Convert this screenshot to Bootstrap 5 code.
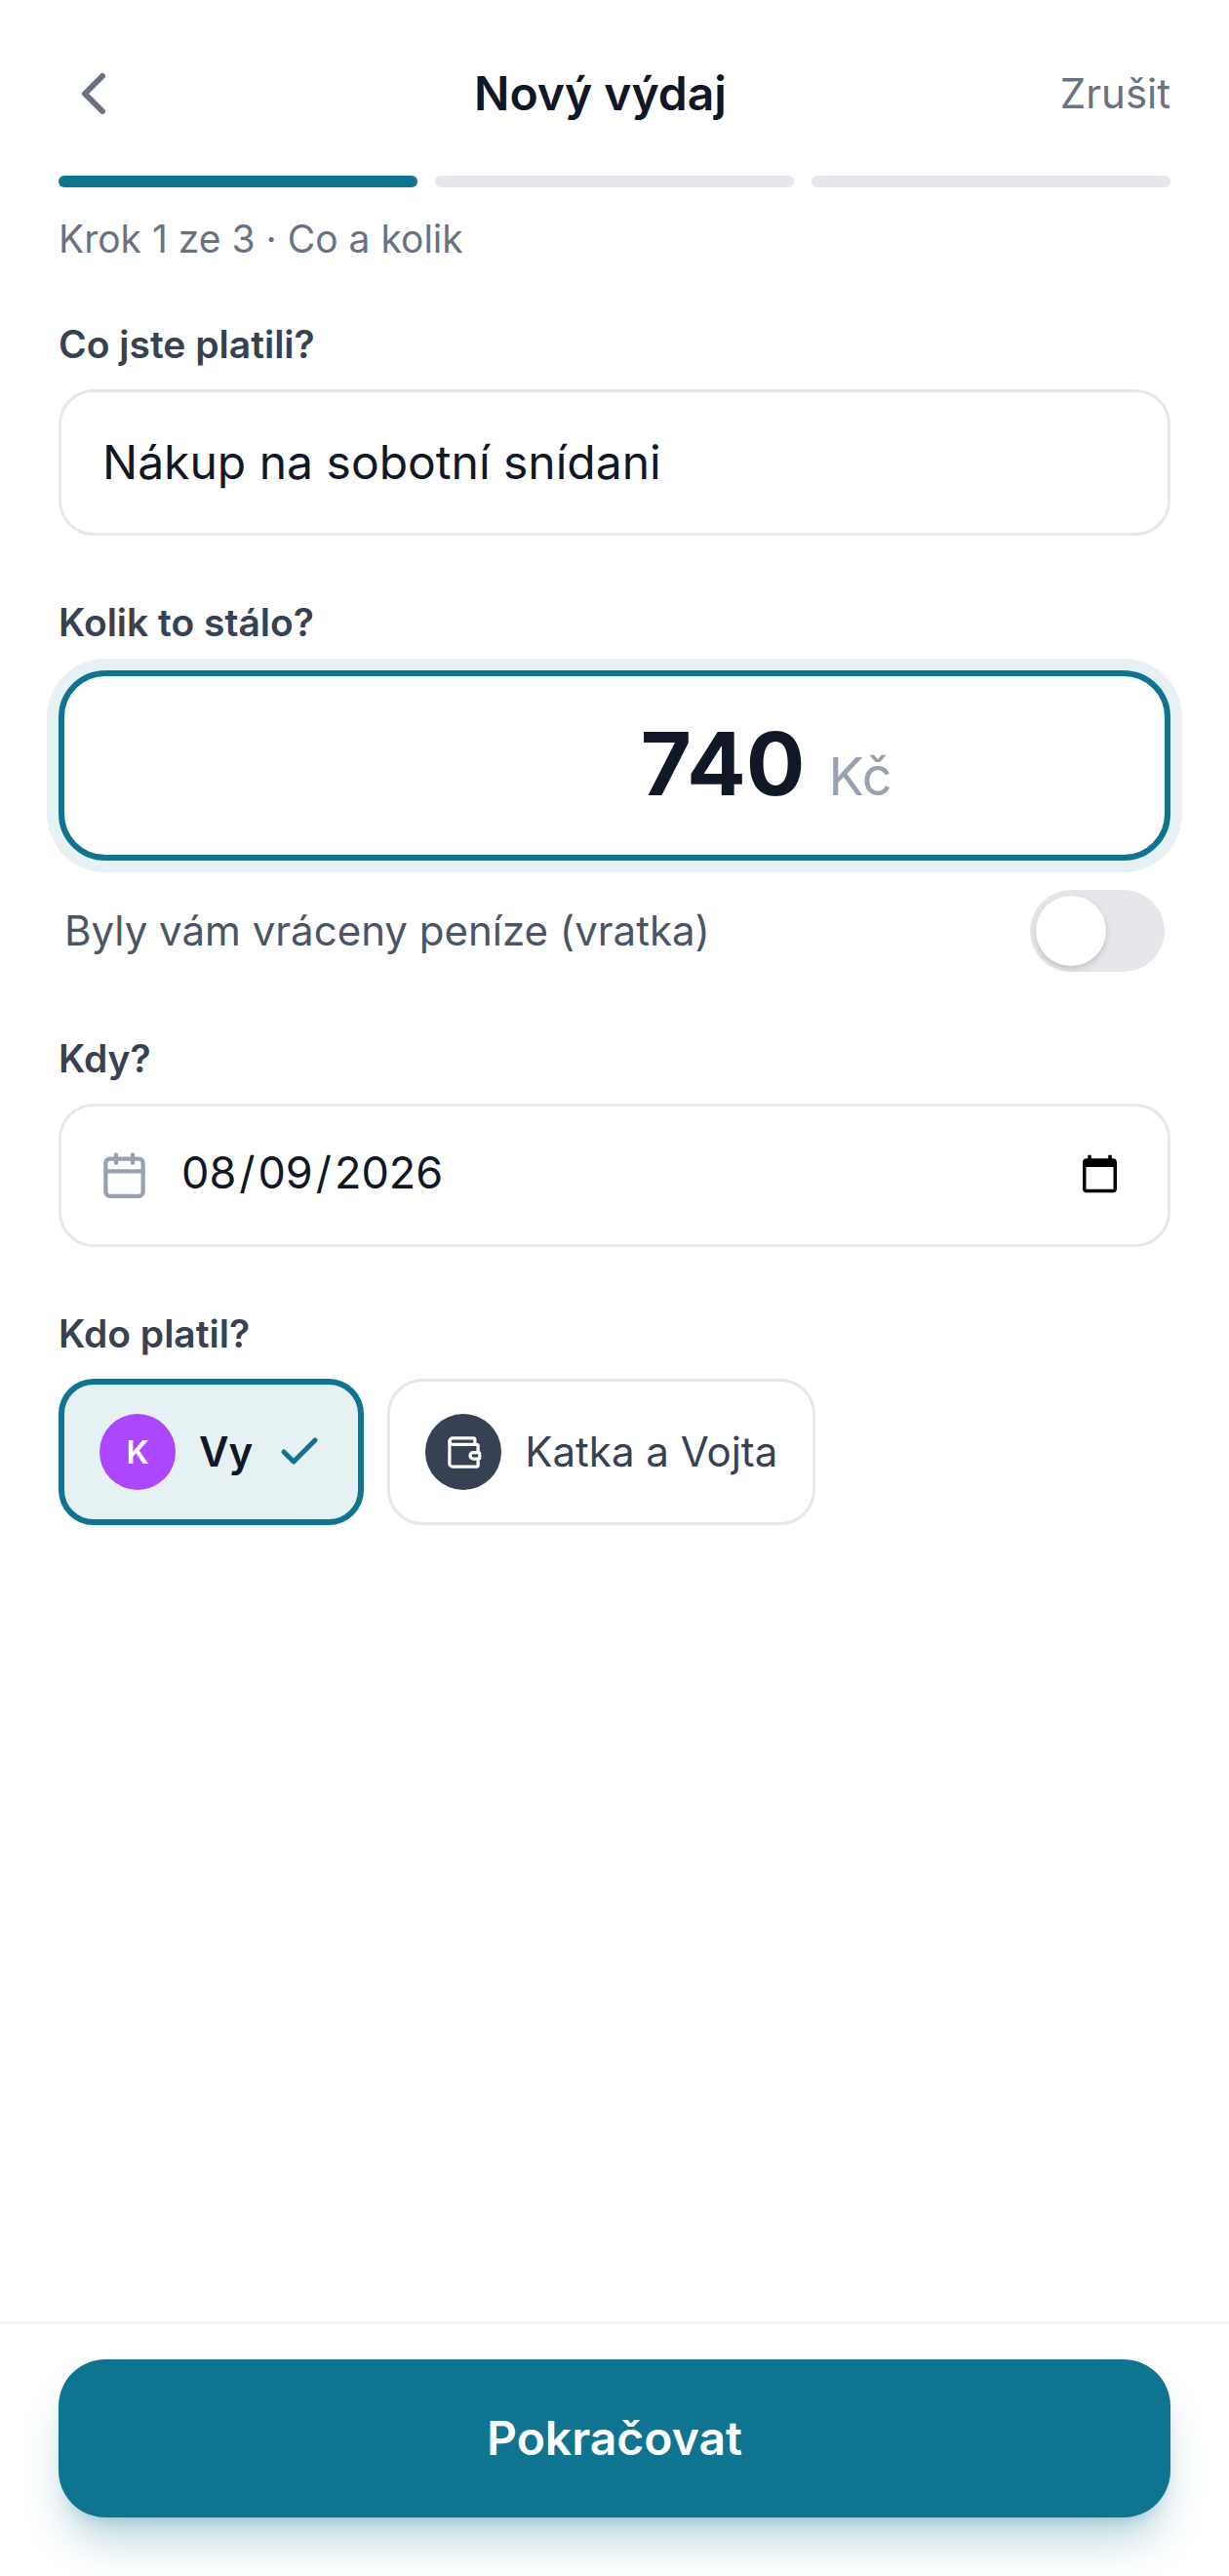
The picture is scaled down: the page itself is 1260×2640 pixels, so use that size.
<!DOCTYPE html>
<html lang="cs">
<head>
<meta charset="utf-8">
<meta name="viewport" content="width=device-width, initial-scale=1">
<title>Nový výdaj</title>
<link rel="stylesheet" href="https://cdn.jsdelivr.net/npm/bootstrap@5.3.0/dist/css/bootstrap.min.css">
<style>
  :root {
    --teal: #0e7490;
    --teal-soft: #e6f1f3;
    --ink: #101828;
    --slate: #364153;
    --muted: #6a7282;
    --faint: #99a1af;
    --line: #e5e7eb;
  }
  body { font-family: Inter, "Liberation Sans", sans-serif; font-size: 42px; line-height: 60px; color: var(--ink); background: #fff; }
  .side-pad { padding-left: 60px; padding-right: 60px; }
  .app-header { padding-top: 48px; padding-bottom: 36px; }
  .back-btn { margin-left: -12px; padding: 12px; line-height: 0; color: var(--muted); }
  .app-title { font-size: 48px; line-height: 72px; font-weight: 600; }
  .cancel-btn { padding: 0; font-size: 42px; line-height: 60px; color: var(--muted); text-decoration: none; }
  .steps { gap: 18px; }
  .step { height: 12px; background: var(--line); }
  .step.done { background: var(--teal); }
  .step-text { margin-top: 24px; font-size: 39px; line-height: 57px; color: var(--muted); }
  .form-body { padding-top: 51px; gap: 60px; }
  .field-label { display: block; margin-bottom: 18px; padding: 0; font-size: 39px; line-height: 57px; font-weight: 600; color: var(--slate); }
  .box, .box:focus { border: 3px solid var(--line); border-radius: 36px; background: #fff; color: var(--ink); box-shadow: none; }
  .text-box { padding: 36px 42px; font-size: 48px; line-height: 72px; }
  .amount-box { height: 195px; margin-top: 21px; padding-top: 30px; gap: 24px; border: 6px solid var(--teal); border-radius: 48px; box-shadow: 0 0 0 12px var(--teal-soft); }
  .amount-input { width: 480px; padding: 0; border: 0; outline: 0; background: none; text-align: right; font-size: 90px; line-height: 120px; font-weight: 700; color: var(--ink); }
  .currency { font-size: 54px; color: var(--faint); }
  .refund { margin-top: 30px; padding: 0 6px; min-height: 84px; color: #4a5565; }
  .form-switch .refund-switch, .form-switch .refund-switch:focus { width: 138px; height: 84px; margin: 0; border: 0; border-radius: 42px; background: var(--line); box-shadow: none; display: flex; align-items: center; padding: 6px; }
  .refund-switch::before { content: ""; width: 72px; height: 72px; border-radius: 50%; background: #fff; box-shadow: 0 3px 9px rgba(0,0,0,.12), 0 3px 6px -3px rgba(0,0,0,.12); }
  .date-box { height: 147px; padding: 0 45px 0 39px; gap: 30px; }
  .date-box svg { color: var(--faint); }
  .date-input { min-width: 0; padding: 0; border: 0; outline: 0; background: none; font-size: 45px; line-height: 66px; color: var(--ink); }
  .date-input::-webkit-datetime-edit { padding-bottom: 6px; }
  .date-input::-webkit-datetime-edit-month-field,
  .date-input::-webkit-datetime-edit-day-field,
  .date-input::-webkit-datetime-edit-year-field { padding: 0 3px; }
  .payers { gap: 24px; }
  .payer { height: 150px; padding: 0 36px; gap: 24px; border: 3px solid var(--line); border-radius: 36px; font-size: 42px; line-height: 60px; color: var(--slate); background: #fff; }
  .payer.chosen { border: 6px solid var(--teal); background: var(--teal-soft); color: var(--ink); font-weight: 600; }
  .avatar { width: 78px; height: 78px; background: var(--slate); color: #fff; font-size: 33px; font-weight: 600; }
  .avatar.violet { background: #ad46ff; }
  .check-icon { color: var(--teal); }
  .app-footer { padding-top: 36px; padding-bottom: 60px; border-top: 3px solid #f3f4f6; }
  .next-btn, .next-btn:hover { padding: 45px; border: 0; border-radius: 48px; font-size: 48px; line-height: 72px; font-weight: 600; color: #fff; background: var(--teal); box-shadow: 0 30px 45px -9px rgba(14,116,144,.3), 0 12px 18px -12px rgba(14,116,144,.3); }
</style>
</head>
<body>
<form class="d-flex flex-column min-vh-100 overflow-hidden">
  <header class="app-header side-pad d-flex align-items-center justify-content-between">
    <button type="button" class="btn border-0 back-btn" aria-label="Zpět">
      <svg width="72" height="72" viewBox="0 0 24 24" fill="none" stroke="currentColor" stroke-width="2" stroke-linecap="round" stroke-linejoin="round" aria-hidden="true"><path d="m15 18-6-6 6-6"/></svg>
    </button>
    <h1 class="app-title m-0">Nový výdaj</h1>
    <button type="button" class="btn border-0 cancel-btn">Zrušit</button>
  </header>

  <div class="side-pad">
    <div class="steps d-flex" aria-hidden="true">
      <div class="step done rounded-pill flex-fill"></div>
      <div class="step rounded-pill flex-fill"></div>
      <div class="step rounded-pill flex-fill"></div>
    </div>
    <p class="step-text mb-0">Krok 1 ze 3 · Co a kolik</p>
  </div>

  <main class="form-body side-pad d-flex flex-column flex-grow-1">
    <div>
      <label class="field-label" for="what">Co jste platili?</label>
      <input class="form-control box text-box" id="what" type="text" value="Nákup na sobotní snídani">
    </div>

    <div>
      <label class="field-label mb-0" for="amount">Kolik to stálo?</label>
      <div class="amount-box d-flex align-items-baseline justify-content-center">
        <input class="amount-input" id="amount" type="text" inputmode="decimal" value="740">
        <span class="currency">Kč</span>
      </div>
      <div class="refund form-switch d-flex align-items-center justify-content-between">
        <label for="refund">Byly vám vráceny peníze (vratka)</label>
        <input class="form-check-input refund-switch" id="refund" type="checkbox" role="switch">
      </div>
    </div>

    <div>
      <label class="field-label" for="when">Kdy?</label>
      <div class="box date-box d-flex align-items-center">
        <svg width="51" height="51" viewBox="0 0 24 24" fill="none" stroke="currentColor" stroke-width="2" stroke-linecap="round" stroke-linejoin="round" aria-hidden="true"><path d="M8 2v4M16 2v4M3 10h18"/><rect x="3" y="4" width="18" height="18" rx="2"/></svg>
        <input class="date-input flex-grow-1" id="when" type="date" lang="en-US" value="2026-08-09">
      </div>
    </div>

    <div role="group" aria-labelledby="payer-label">
      <div class="field-label" id="payer-label">Kdo platil?</div>
      <div class="payers d-flex flex-wrap">
        <button type="button" class="payer chosen d-flex align-items-center" aria-pressed="true">
          <span class="avatar violet rounded-circle d-flex align-items-center justify-content-center">K</span>
          <span>Vy</span>
          <svg class="check-icon" width="48" height="48" viewBox="0 0 24 24" fill="none" stroke="currentColor" stroke-width="2.5" stroke-linecap="round" stroke-linejoin="round" aria-hidden="true"><path d="M20 6 9 17l-5-5"/></svg>
        </button>
        <button type="button" class="payer d-flex align-items-center" aria-pressed="false">
          <span class="avatar rounded-circle d-flex align-items-center justify-content-center">
            <svg width="39" height="39" viewBox="0 0 24 24" fill="none" stroke="currentColor" stroke-width="2" stroke-linecap="round" stroke-linejoin="round" aria-hidden="true"><path d="M19 7V4a1 1 0 0 0-1-1H5a2 2 0 0 0 0 4h15a1 1 0 0 1 1 1v4h-3a2 2 0 0 0 0 4h3a1 1 0 0 0 1-1v-2a1 1 0 0 0-1-1"/><path d="M3 5v14a2 2 0 0 0 2 2h15a1 1 0 0 0 1-1v-4"/></svg>
          </span>
          <span>Katka a Vojta</span>
        </button>
      </div>
    </div>
  </main>

  <footer class="app-footer side-pad">
    <button type="submit" class="btn next-btn w-100">Pokračovat</button>
  </footer>
</form>
<script src="https://cdn.jsdelivr.net/npm/bootstrap@5.3.0/dist/js/bootstrap.bundle.min.js"></script>
</body>
</html>
